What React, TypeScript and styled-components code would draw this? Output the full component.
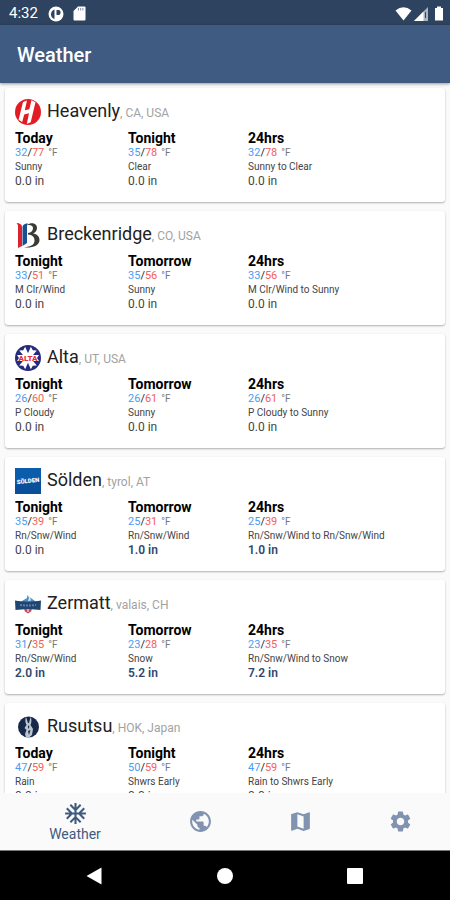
import React from "react";
import styled, { createGlobalStyle } from "styled-components";
import { MdAcUnit, MdMap, MdPublic, MdSettings } from "react-icons/md";

const GlobalStyle = createGlobalStyle`
  * { box-sizing: border-box; }
  body { margin: 0; background: #fafafa; font-family: Roboto, "Noto Sans", sans-serif; }
  h1, h2, h3, p, ul { margin: 0; padding: 0; }
`;

const Screen = styled.div`
  display: flex;
  flex-direction: column;
  height: 100vh;
  color: #212121;
  background: #fafafa;
`;

const StatusBar = styled.div`
  display: flex;
  align-items: center;
  justify-content: space-between;
  height: 25px;
  flex: none;
  padding: 0 4px 0 9px;
  background: #2e435f;
  color: #fff;
  font-size: 15px;
  line-height: 25px;
`;

const StatusGroup = styled.div<{ $gap: number }>`
  display: flex;
  align-items: center;
  gap: ${(p) => p.$gap}px;
  padding-top: 2px;
  svg { display: block; }
`;

const Clock = styled.time`
  margin-right: 1px;
`;

const AppBar = styled.header`
  display: flex;
  align-items: center;
  flex: none;
  height: 58px;
  padding: 2px 17px 0;
  background: #3f5b82;
  color: #fff;
  box-shadow: 0 1px 3px rgba(0, 0, 0, 0.4);
  z-index: 1;
`;

const Title = styled.h1`
  font-size: 20px;
  line-height: 24px;
  font-weight: 500;
`;

const ResortList = styled.ul`
  flex: 1;
  min-height: 0;
  overflow-y: auto;
  scrollbar-width: none;
  display: flex;
  flex-direction: column;
  gap: 9px;
  && { padding: 5px; }
  list-style: none;
`;

const Card = styled.li`
  flex: none;
  padding: 10px 10px 14px;
  border-radius: 3px;
  background: #fff;
  box-shadow: 0 1px 2px rgba(0, 0, 0, 0.3);
`;

const CardHead = styled.div`
  display: flex;
  align-items: center;
  gap: 6px;
  margin-bottom: 4px;
  svg { display: block; flex: none; }
`;

const ResortName = styled.h2`
  font-size: 18px;
  line-height: 26px;
  font-weight: 400;
`;

const Region = styled.span`
  font-size: 12px;
  color: #a2a2a2;
`;

const Periods = styled.div`
  display: grid;
  grid-template-columns: 113fr 120fr 187fr;
`;

const PeriodName = styled.h3`
  font-size: 14px;
  line-height: 16px;
  font-weight: 700;
  color: #000;
`;

const Temps = styled.p`
  font-size: 11px;
  line-height: 14px;
  color: #222;
`;

const Low = styled.span`
  color: #4c9cf0;
`;

const High = styled.span`
  color: #f4605c;
`;

const Unit = styled.span`
  margin-left: 4px;
  font-size: 10px;
  color: #777;
`;

const Condition = styled.p`
  font-size: 10px;
  line-height: 14px;
  color: #444;
`;

const Amount = styled.p<{ $snow: boolean }>`
  font-size: 12px;
  line-height: 14px;
  font-weight: ${(p) => (p.$snow ? 600 : 400)};
  color: ${(p) => (p.$snow ? "#2d4870" : "#444")};
`;

const TabBar = styled.nav`
  display: grid;
  grid-template-columns: 3fr 2fr 2fr 2fr;
  flex: none;
  height: 57px;
  background: #fafafa;
  z-index: 1;
`;

const Tab = styled.button<{ $active?: boolean }>`
  display: flex;
  flex-direction: column;
  align-items: center;
  justify-content: center;
  padding: 0;
  border: 0;
  background: none;
  font-family: inherit;
  font-size: 14px;
  line-height: 17px;
  color: ${(p) => (p.$active ? "#3f5b82" : "#8193b0")};
  svg { display: block; }
`;

const SystemBar = styled.div`
  display: flex;
  align-items: center;
  justify-content: center;
  gap: 106px;
  flex: none;
  height: 50px;
  border-top: 1px solid #777;
  background: #000;
`;

const SystemButton = styled.button`
  width: 24px;
  height: 24px;
  padding: 0;
  border: 0;
  background: none;
  svg { display: block; }
`;

const HeavenlyLogo = () => (
  <svg width="26" height="26" viewBox="0 0 26 26" aria-hidden="true">
    <circle cx="13" cy="13" r="13" fill="#e31b23" />
    <path
      d="M8 3 12 1.5 9.8 11.2 14.3 10.2 16.5 1.2 20.5 3.2 15.7 23.2 11.8 25 14 14.3 9.2 15.5 7.2 23 3.6 20.8Z"
      fill="#fff"
    />
  </svg>
);

const BreckenridgeLogo = () => (
  <svg width="26" height="26" viewBox="0 0 26 26" aria-hidden="true">
    <path d="M1.5 1C4 1 7 2 7 5V24L3 26V5C3 3 2.7 2 1.5 1Z" fill="#d8232f" />
    <path d="M7.5 6C7.5 3 9 1.5 13 1.5 12 2.7 12 4 12 6V21L7.5 24Z" fill="#1c4f91" />
    <path
      d="M12 3C16 0 22 1 22 6 22 9 20 10.5 18 11.5 22 12 24.5 14.5 24.5 18 24.5 23 19 25.5 12 25.5L9 25.5C16 24.5 19.5 23 19.5 18.5 19.5 14.5 17 13 13 12.5V11C16 10.5 18 9 18 6 18 3.5 15.5 2.5 12 3Z"
      fill="#3c3a35"
    />
  </svg>
);

const AltaLogo = () => (
  <svg width="26" height="26" viewBox="0 0 26 26" aria-hidden="true">
    <circle cx="13" cy="13" r="13" fill="#252b7d" />
    <g fill="#fff">
      <path d="M11 13 9.5 2 13 4 16.5 2 15 13 16.5 24 13 22 9.5 24Z" transform="rotate(32 13 13)" />
      <path d="M11 13 9.5 2 13 4 16.5 2 15 13 16.5 24 13 22 9.5 24Z" transform="rotate(-32 13 13)" />
      <path d="M2 10 4 13 2 16H24L22 13 24 10Z" />
    </g>
    <text x="13" y="16" textAnchor="middle" fontFamily="Roboto" fontSize="8" fontWeight="900" fill="#e32f3d">
      ALTA
    </text>
  </svg>
);

const SoldenLogo = () => (
  <svg width="26" height="26" viewBox="0 0 26 26" aria-hidden="true">
    <path d="M0 0H26V26H0Z" fill="#0b5cab" />
    <path d="M0 17 26 13V26H0Z" fill="#0a4f99" />
    <text
      x="13"
      y="15"
      textAnchor="middle"
      fontFamily="Roboto"
      fontSize="6"
      fontWeight="900"
      fill="#fff"
      transform="rotate(-6 13 13)"
    >
      SÖLDEN
    </text>
  </svg>
);

const ZermattLogo = () => (
  <svg width="26" height="26" viewBox="0 0 26 26" aria-hidden="true">
    <path d="M7 10 12 7 12.5 4 15 6.5 20 10V12H7Z" fill="#4f8cc4" />
    <path d="M12.5 4 14 7 13 10 16 9.5 15 6.5Z" fill="#dcecf8" />
    <path d="M0 9.5C8 11 18 11 26 9.5L25.5 19C18 18 8 18 0.5 19Z" fill="#1f4573" />
    <path d="M5 14Q13 15 21 14" fill="none" stroke="#5f7fa8" strokeWidth="2" strokeDasharray="2 1" />
    <path d="M9 18H17L16 20.5 13 22.5 10 20.5Z" fill="#ce4655" />
    <path d="M12.5 18H13.5V21H12.5Z" fill="#fff" />
  </svg>
);

const RusutsuLogo = () => (
  <svg width="26" height="26" viewBox="0 0 26 26" aria-hidden="true">
    <circle cx="13.5" cy="13" r="10.5" fill="#17294a" />
    <path
      d="M11 3 13 9 14 9 15.5 3C17 5 16.5 9 15.5 11L18 15 17 21 14 23.5H11L10 20 11.5 16 9.5 14 11.5 11C10 8 10 5 11 3Z"
      fill="#bcc4ce"
    />
    <path d="M13 11 14.5 13 13 15ZM13 17 15.5 16 14 21Z" fill="#17294a" />
  </svg>
);

type Period = { name: string; low: number; high: number; condition: string; amount: string };
type Resort = { name: string; region: string; Logo: () => React.ReactElement; periods: Period[] };

const period = (name: string, low: number, high: number, condition: string, amount = "0.0"): Period => ({
  name,
  low,
  high,
  condition,
  amount,
});

const resorts: Resort[] = [
  {
    name: "Heavenly",
    region: "CA, USA",
    Logo: HeavenlyLogo,
    periods: [
      period("Today", 32, 77, "Sunny"),
      period("Tonight", 35, 78, "Clear"),
      period("24hrs", 32, 78, "Sunny to Clear"),
    ],
  },
  {
    name: "Breckenridge",
    region: "CO, USA",
    Logo: BreckenridgeLogo,
    periods: [
      period("Tonight", 33, 51, "M Clr/Wind"),
      period("Tomorrow", 35, 56, "Sunny"),
      period("24hrs", 33, 56, "M Clr/Wind to Sunny"),
    ],
  },
  {
    name: "Alta",
    region: "UT, USA",
    Logo: AltaLogo,
    periods: [
      period("Tonight", 26, 60, "P Cloudy"),
      period("Tomorrow", 26, 61, "Sunny"),
      period("24hrs", 26, 61, "P Cloudy to Sunny"),
    ],
  },
  {
    name: "Sölden",
    region: "tyrol, AT",
    Logo: SoldenLogo,
    periods: [
      period("Tonight", 35, 39, "Rn/Snw/Wind"),
      period("Tomorrow", 25, 31, "Rn/Snw/Wind", "1.0"),
      period("24hrs", 25, 39, "Rn/Snw/Wind to Rn/Snw/Wind", "1.0"),
    ],
  },
  {
    name: "Zermatt",
    region: "valais, CH",
    Logo: ZermattLogo,
    periods: [
      period("Tonight", 31, 35, "Rn/Snw/Wind", "2.0"),
      period("Tomorrow", 23, 28, "Snow", "5.2"),
      period("24hrs", 23, 35, "Rn/Snw/Wind to Snow", "7.2"),
    ],
  },
  {
    name: "Rusutsu",
    region: "HOK, Japan",
    Logo: RusutsuLogo,
    periods: [
      period("Today", 47, 59, "Rain"),
      period("Tonight", 50, 59, "Shwrs Early"),
      period("24hrs", 47, 59, "Rain to Shwrs Early"),
    ],
  },
];

export default function App() {
  return (
    <Screen>
      <GlobalStyle />
      <StatusBar>
        <StatusGroup $gap={9}>
          <Clock>4:32</Clock>
          <svg width="16" height="16" viewBox="0 0 16 16" aria-hidden="true">
            <circle cx="8" cy="8" r="7.5" fill="#fff" />
            <path d="M6.5 3.5V13C4 12.3 3 10.5 3 8.3 3 6 4.3 4.200 6.500 3.500Z" fill="#2e435f" />
            <path d="M8.5 4H10.5C13.3 4 13.3 9 10.5 9H8.5Z" fill="#2e435f" />
          </svg>
          <svg width="13" height="15" viewBox="0 0 13 15" aria-hidden="true">
            <path d="M5 0.5H11.5Q12.5 0.5 12.5 1.5V13.5Q12.5 14.5 11.5 14.5H1.5Q0.5 14.5 0.5 13.5V5Z" fill="#fff" />
            <path d="M5.5 2V4.5M7.7 2V4.5M9.9 2V4.5" stroke="#8290a3" strokeWidth="1" />
          </svg>
        </StatusGroup>
        <StatusGroup $gap={2}>
          <svg width="17" height="14" viewBox="0 0 17 14" aria-hidden="true">
            <path d="M0.5 3.5Q8.5-3 16.5 3.5L8.5 13.5Z" fill="#fff" />
          </svg>
          <svg width="15" height="14" viewBox="0 0 15 14" aria-hidden="true">
            <path d="M14 0V14H0Z" fill="#a9b4c2" />
            <path d="M9.5 4.5V14H0Z" fill="#fff" />
            <path d="M11.5 5V11" stroke="#2e435f" strokeWidth="1" />
          </svg>
          <svg width="15" height="15" viewBox="0 0 15 15" aria-hidden="true">
            <path d="M6 0.5H10V2H12V14.5H4V2H6Z" fill="#fff" />
          </svg>
        </StatusGroup>
      </StatusBar>
      <AppBar>
        <Title>Weather</Title>
      </AppBar>
      <ResortList>
        {resorts.map(({ name, region, Logo, periods }) => (
          <Card key={name}>
            <CardHead>
              <Logo />
              <ResortName>
                {name}
                <Region>, {region}</Region>
              </ResortName>
            </CardHead>
            <Periods>
              {periods.map((p) => (
                <div key={p.name}>
                  <PeriodName>{p.name}</PeriodName>
                  <Temps>
                    <Low>{p.low}</Low>/<High>{p.high}</High>
                    <Unit>°F</Unit>
                  </Temps>
                  <Condition>{p.condition}</Condition>
                  <Amount $snow={p.amount !== "0.0"}>{p.amount} in</Amount>
                </div>
              ))}
            </Periods>
          </Card>
        ))}
      </ResortList>
      <TabBar>
        <Tab type="button" $active aria-current="page">
          <MdAcUnit size={25} />
          Weather
        </Tab>
        <Tab type="button" aria-label="Resorts">
          <MdPublic size={25} />
        </Tab>
        <Tab type="button" aria-label="Map">
          <MdMap size={25} />
        </Tab>
        <Tab type="button" aria-label="Settings">
          <MdSettings size={25} />
        </Tab>
      </TabBar>
      <SystemBar>
        <SystemButton type="button" aria-label="Back">
          <svg width="24" height="24" viewBox="0 0 24 24">
            <path d="M18.5 3.5V20.5L3.5 12Z" fill="#fff" />
          </svg>
        </SystemButton>
        <SystemButton type="button" aria-label="Home">
          <svg width="24" height="24" viewBox="0 0 24 24">
            <circle cx="12" cy="12" r="8" fill="#fff" />
          </svg>
        </SystemButton>
        <SystemButton type="button" aria-label="Recent apps">
          <svg width="24" height="24" viewBox="0 0 24 24">
            <rect x="4" y="4" width="16" height="16" rx="1" fill="#fff" />
          </svg>
        </SystemButton>
      </SystemBar>
    </Screen>
  );
}
